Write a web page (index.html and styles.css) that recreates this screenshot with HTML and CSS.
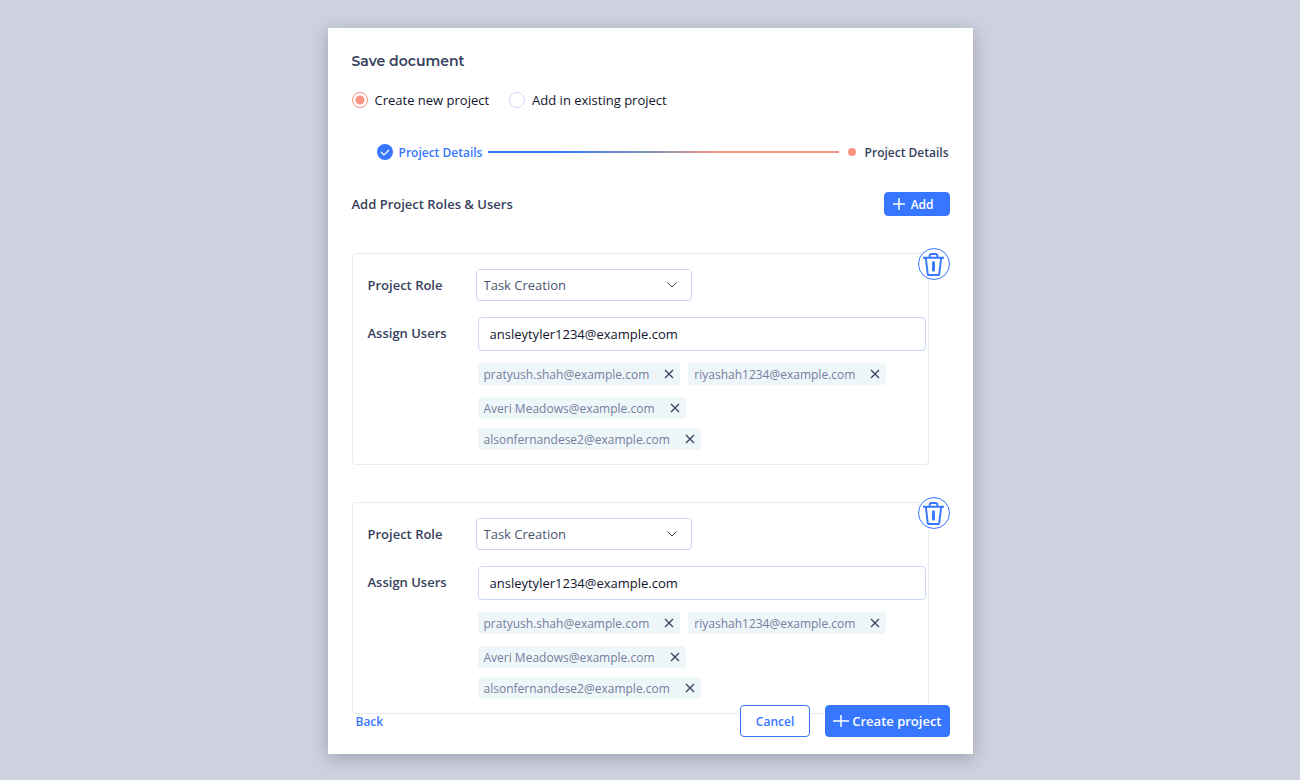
FILE: index.html
```html
<!DOCTYPE html>
<html lang="en">
<head>
    <meta charset="utf-8">
    <title>Save document</title>
    <link rel="stylesheet" href="styles.css">
</head>
<body>
    <form class="modal">
        <h1 class="title">Save document</h1>

        <div class="radio-group">
            <label class="radio-item">
                <input type="radio" name="mode" class="radio" checked>
                Create new project
            </label>
            <label class="radio-item">
                <input type="radio" name="mode" class="radio">
                Add in existing project
            </label>
        </div>

        <div class="stepper">
            <svg class="step-check" viewBox="0 0 16 16">
                <circle cx="8" cy="8" r="8" fill="#3777ff"/>
                <path d="M4 8l3 3 5-5" fill="none" stroke="#fff" stroke-width="1.2"/>
            </svg>
            <span class="step-label active">Project Details</span>
            <span class="step-line"></span>
            <span class="step-dot"></span>
            <span class="step-label">Project Details</span>
        </div>

        <div class="section-header">
            <h2 class="section-title">Add Project Roles &amp; Users</h2>
            <button type="button" class="button small">
                <svg class="plus" viewBox="0 0 12 12"><path d="M6 0v12M0 6h12"/></svg>
                Add
            </button>
        </div>

        <div class="role-card">
            <button type="button" class="delete-button" aria-label="Delete role">
                <svg viewBox="0 0 24 26">
                    <path d="M1 6h22M8 6V4q0-2 2-2h4q2 0 2 2v2M4 6l2 17q0 1 1 1h10q1 0 1-1l2-17"/>
                    <path d="M12 11v8" stroke-width="3" stroke-linecap="round"/>
                </svg>
            </button>
            <div class="field">
                <label class="field-label" for="role1">Project Role</label>
                <div class="select-wrap">
                    <select id="role1" class="select">
                        <option>Task Creation</option>
                    </select>
                    <svg class="chevron" viewBox="0 0 10 6"><path d="M.5.5L5 5 9.500.5"/></svg>
                </div>
            </div>
            <div class="field">
                <label class="field-label" for="users1">Assign Users</label>
                <div class="users">
                    <input type="text" id="users1" class="input" value="ansleytyler1234@example.com">
                    <div class="tag-row">
                        <span class="tag">pratyush.shah@example.com <button type="button" class="tag-remove" aria-label="Remove"><svg viewBox="0 0 8 8"><path d="M0 0l8 8M8 0L0 8"/></svg></button></span>
                        <span class="tag">riyashah1234@example.com <button type="button" class="tag-remove" aria-label="Remove"><svg viewBox="0 0 8 8"><path d="M0 0l8 8M8 0L0 8"/></svg></button></span>
                    </div>
                    <div class="tag-row">
                        <span class="tag">Averi Meadows@example.com <button type="button" class="tag-remove" aria-label="Remove"><svg viewBox="0 0 8 8"><path d="M0 0l8 8M8 0L0 8"/></svg></button></span>
                    </div>
                    <div class="tag-row tight">
                        <span class="tag">alsonfernandese2@example.com <button type="button" class="tag-remove" aria-label="Remove"><svg viewBox="0 0 8 8"><path d="M0 0l8 8M8 0L0 8"/></svg></button></span>
                    </div>
                </div>
            </div>
        </div>

        <div class="role-card">
            <button type="button" class="delete-button" aria-label="Delete role">
                <svg viewBox="0 0 24 26">
                    <path d="M1 6h22M8 6V4q0-2 2-2h4q2 0 2 2v2M4 6l2 17q0 1 1 1h10q1 0 1-1l2-17"/>
                    <path d="M12 11v8" stroke-width="3" stroke-linecap="round"/>
                </svg>
            </button>
            <div class="field">
                <label class="field-label" for="role2">Project Role</label>
                <div class="select-wrap">
                    <select id="role2" class="select">
                        <option>Task Creation</option>
                    </select>
                    <svg class="chevron" viewBox="0 0 10 6"><path d="M.5.5L5 5 9.500.5"/></svg>
                </div>
            </div>
            <div class="field">
                <label class="field-label" for="users2">Assign Users</label>
                <div class="users">
                    <input type="text" id="users2" class="input" value="ansleytyler1234@example.com">
                    <div class="tag-row">
                        <span class="tag">pratyush.shah@example.com <button type="button" class="tag-remove" aria-label="Remove"><svg viewBox="0 0 8 8"><path d="M0 0l8 8M8 0L0 8"/></svg></button></span>
                        <span class="tag">riyashah1234@example.com <button type="button" class="tag-remove" aria-label="Remove"><svg viewBox="0 0 8 8"><path d="M0 0l8 8M8 0L0 8"/></svg></button></span>
                    </div>
                    <div class="tag-row">
                        <span class="tag">Averi Meadows@example.com <button type="button" class="tag-remove" aria-label="Remove"><svg viewBox="0 0 8 8"><path d="M0 0l8 8M8 0L0 8"/></svg></button></span>
                    </div>
                    <div class="tag-row tight">
                        <span class="tag">alsonfernandese2@example.com <button type="button" class="tag-remove" aria-label="Remove"><svg viewBox="0 0 8 8"><path d="M0 0l8 8M8 0L0 8"/></svg></button></span>
                    </div>
                </div>
            </div>
        </div>

        <div class="footer">
            <a href="#" class="back-link">Back</a>
            <button type="button" class="button secondary">Cancel</button>
            <button type="submit" class="button">
                <svg class="plus" viewBox="0 0 16 12"><path d="M8 0v12M0 6h16"/></svg>
                Create project
            </button>
        </div>
    </form>
</body>
</html>
```
FILE: styles.css
```css
:root {
    --primary-color: #3777ff;
    --accent-color: #fb9383;
    --text-color: #36415c;
    --field-border: #cbd8fa;
    --card-border: #e9eaf3;
    --tag-bg: #eef6fa;
    --border-radius: 4px;
}

* {
    box-sizing: border-box;
}

body {
    min-height: 100vh;
    margin: 0;
    padding: 28px 16px 26px;
    background: #ced2de;
    color: var(--text-color);
    font-family: 'Open Sans', sans-serif;
    font-size: 13px;
}

button,
input,
select {
    font-family: inherit;
    font-size: 13px;
}

svg {
    display: block;
    flex-shrink: 0;
}

.modal {
    max-width: 645px;
    margin: 0 auto;
    padding: 24px 23px 17px 24px;
    background: #fff;
    box-shadow: 0 4px 16px rgba(80, 85, 110, 0.4);
}

.title {
    margin: 0 0 20px;
    font-family: Montserrat, Inter, sans-serif;
    font-size: 14px;
    font-weight: 600;
    line-height: 18px;
}

.radio-group {
    display: flex;
    gap: 20px;
    margin-bottom: 32px;
}

.radio-item {
    display: flex;
    align-items: center;
    gap: 7px;
    line-height: 20px;
    color: #11142d;
}

.radio {
    appearance: none;
    width: 16px;
    height: 16px;
    margin: 0;
    border: 1px solid var(--field-border);
    border-radius: 50%;
}

.radio:checked {
    border-color: var(--accent-color);
    background: radial-gradient(circle, var(--accent-color) 4px, transparent 5px);
}

.stepper {
    display: flex;
    align-items: center;
    height: 20px;
    margin-bottom: 30px;
    padding: 0 1px 0 25px;
}

.step-check {
    width: 16px;
    height: 16px;
    margin-right: 6px;
}

.step-label {
    font-size: 12px;
    font-weight: 600;
}

.step-label.active {
    color: var(--primary-color);
}

.step-line {
    flex: 1;
    height: 2px;
    margin: 0 9px 0 6px;
    background: linear-gradient(90deg, var(--primary-color) 20%, #8f96ac 50%, var(--accent-color) 65%);
}

.step-dot {
    width: 8px;
    height: 8px;
    margin-right: 9px;
    border-radius: 50%;
    background: var(--accent-color);
}

.section-header {
    display: flex;
    align-items: center;
    justify-content: space-between;
    margin-bottom: 37px;
}

.section-title {
    margin: 0;
    font-size: 13px;
    font-weight: 600;
}

.button {
    display: flex;
    align-items: center;
    justify-content: center;
    gap: 3px;
    height: 32px;
    padding: 0 7px;
    border: 1px solid var(--primary-color);
    border-radius: var(--border-radius);
    background: var(--primary-color);
    color: #fff;
    font-weight: 600;
    cursor: pointer;
}

.button.small {
    gap: 6px;
    height: 24px;
    padding: 0 15px 0 8px;
    font-size: 12px;
}

.button.secondary {
    padding: 0 15px;
    background: #fff;
    color: var(--primary-color);
    font-size: 12px;
}

.plus {
    height: 12px;
    fill: none;
    stroke: currentColor;
    stroke-width: 1.5;
}

.role-card {
    position: relative;
    margin: 0 21px 37px 0;
    padding: 15px 2px 14px 15px;
    border: 1px solid var(--card-border);
    border-radius: var(--border-radius);
}

/* sits over the top right corner of the card */
.delete-button {
    position: absolute;
    top: -6px;
    right: -22px;
    display: flex;
    align-items: center;
    justify-content: center;
    width: 32px;
    height: 32px;
    padding: 0;
    border: 1px solid var(--primary-color);
    border-radius: 50%;
    background: #fff;
    cursor: pointer;
}

.delete-button svg {
    width: 23px;
    height: 25px;
    fill: none;
    stroke: var(--primary-color);
    stroke-width: 2;
}

.field {
    display: grid;
    grid-template-columns: 108px 1fr;
}

.field + .field {
    margin-top: 16px;
}

.field-label {
    line-height: 32px;
    font-weight: 600;
}

.select-wrap {
    position: relative;
    max-width: 216px;
}

.select {
    appearance: none;
    display: block;
    width: 100%;
    height: 32px;
    padding: 0 32px 0 7px;
    border: 1px solid var(--field-border);
    border-radius: var(--border-radius);
    background: #fff;
    color: #4a5570;
}

.chevron {
    position: absolute;
    top: 13px;
    right: 15px;
    width: 10px;
    height: 6px;
    fill: none;
    stroke: var(--text-color);
    pointer-events: none;
}

.users {
    padding-left: 2px;
}

.input {
    display: block;
    width: 100%;
    height: 34px;
    padding: 0 11px;
    border: 1px solid var(--field-border);
    border-radius: var(--border-radius);
    color: #11142d;
}

.tag-row {
    display: flex;
    gap: 8px;
    margin-top: 12px;
}

.tag-row.tight {
    margin-top: 9px;
}

.tag {
    display: flex;
    align-items: center;
    gap: 16px;
    height: 22px;
    padding: 0 7px 0 6px;
    border-radius: var(--border-radius);
    background: var(--tag-bg);
    color: #74809b;
    font-size: 12px;
}

.tag-remove {
    padding: 0;
    border: none;
    background: none;
    cursor: pointer;
}

.tag-remove svg {
    width: 8px;
    height: 8px;
    overflow: visible;
    fill: none;
    stroke: var(--text-color);
    stroke-width: 1.3;
}

.footer {
    position: relative;
    display: flex;
    align-items: center;
    gap: 15px;
    margin-top: -46px;
}

.back-link {
    margin-right: auto;
    padding-left: 4px;
    color: var(--primary-color);
    font-size: 12px;
    font-weight: 600;
    text-decoration: none;
}
```
